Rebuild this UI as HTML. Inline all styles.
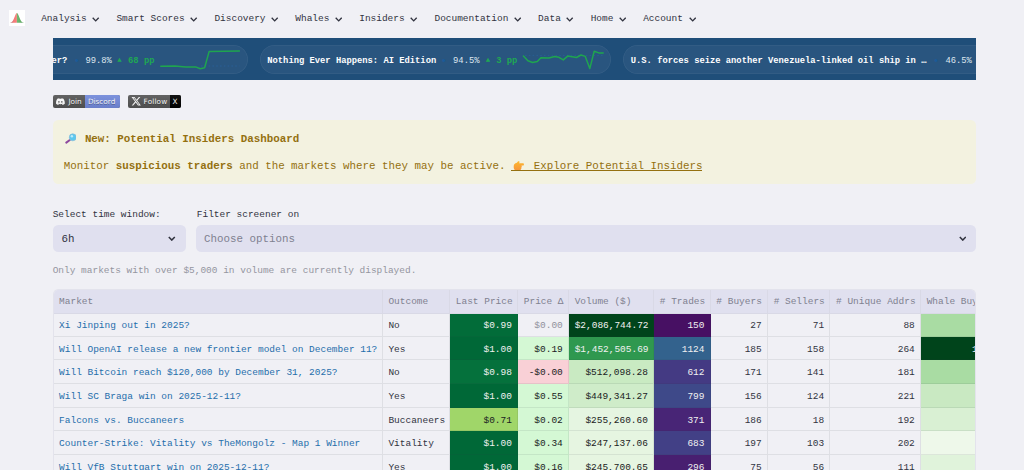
<!DOCTYPE html>
<html lang="en">
<head>
<meta charset="utf-8">
<title>Market Screener</title>
<style>
*{box-sizing:border-box;margin:0;padding:0}
html,body{width:1024px;height:470px;overflow:hidden;background:#f0f0f5}
body{font-family:"Liberation Mono","DejaVu Sans Mono",monospace;color:#31333f;position:relative;-webkit-font-smoothing:antialiased}
a{color:inherit}
/* ---------- nav ---------- */
#logo{position:absolute;left:9.1px;top:10.2px;width:15.9px;height:15.7px;background:#fff}
#nav{position:absolute;left:41.2px;top:10px;height:16px;display:flex;align-items:center;font-size:9.475px;color:#31333f;white-space:nowrap}
#nav .it{display:flex;align-items:center;margin-right:16.8px}
#nav svg{margin-left:5.6px;width:7.4px;height:5px;display:block;position:relative;top:1px}
/* ---------- ticker ---------- */
#ticker{position:absolute;left:53px;top:38px;width:923px;height:42.2px;background:#1f4e79;overflow:hidden;font-size:8.8px;color:#fff;white-space:nowrap}
.pill{position:absolute;top:6.8px;height:28.9px;border-radius:14.5px;background:#29557f;box-shadow:inset 0 0 0 0.8px rgba(255,255,255,.06)}
.pill span{position:absolute;top:11.5px;line-height:10px}
.pill .t{font-weight:bold;color:#fdfdfe}
.pill .d{color:#1b5a98;font-size:11px;margin-left:-0.6px;top:11.4px!important}
.pill .p{color:#dfe7f0}
.pill .g{color:#1fa853;font-weight:bold}
.pill svg{position:absolute;left:0;top:0;overflow:visible}
/* ---------- badges ---------- */
.badge{position:absolute;top:94.6px;height:13.3px;border-radius:2px;overflow:hidden;font-family:"DejaVu Sans","Liberation Sans",sans-serif;font-size:7.3px;color:#fff;line-height:13.3px;white-space:nowrap;background:#555}
.badge span{position:absolute;top:0;text-shadow:0 0.6px 0 rgba(0,0,0,.35)}
.badge .r{position:absolute;top:0;bottom:0;right:0}
.badge::after{content:"";position:absolute;inset:0;background:linear-gradient(180deg,rgba(255,255,255,.08),rgba(0,0,0,.08))}
/* ---------- banner ---------- */
#banner{position:absolute;left:52.5px;top:119.5px;width:923.5px;height:64.8px;border-radius:5.3px;background:#f3f2e0;color:#94700f;font-size:10.83px;white-space:nowrap}
#banner .h{position:absolute;left:12px;top:12.2px;line-height:14px;font-weight:bold}
#banner .l{position:absolute;left:11.2px;top:39.8px;line-height:14px}
#banner b{font-weight:bold}
#banner a{text-decoration:none;display:inline-block;position:relative;margin-left:-0.6px}
#banner a::after{content:"";position:absolute;left:0;right:0.4px;top:11.1px;height:0.9px;background:#94700f}
#banner a i{display:inline-block;width:15.7px;height:10.2px;vertical-align:-1.6px}
/* ---------- controls ---------- */
.lbl{position:absolute;top:209.1px;font-size:9.475px;line-height:12px;color:#31333f;white-space:nowrap}
.sel{position:absolute;top:225px;height:27px;border-radius:5.3px;background:#e0e0ef;font-size:10.83px;line-height:27px;white-space:nowrap}
.sel span{position:absolute;left:8.8px;top:1.4px}
.sel svg{position:absolute;top:10.6px;width:7.6px;height:5.4px}
#cap{position:absolute;left:52.7px;top:265.2px;font-size:9.475px;line-height:12px;color:#94959f;white-space:nowrap}
/* ---------- table ---------- */
#tw{position:absolute;left:52.5px;top:288.8px;width:923.8px;height:190px;overflow:hidden;border:0.7px solid #e3e3ec;border-bottom:0;border-radius:5.3px 5.3px 0 0}
table{border-collapse:separate;border-spacing:0;table-layout:fixed;width:981.5px;font-size:9.475px;white-space:nowrap}
th{height:24px;background:#e0e0ef;color:#7f8190;font-weight:normal;text-align:left;padding:1.4px 0 0 5.6px;border-right:0.7px solid #d9d9e6;border-bottom:0.7px solid #d9d9e6;overflow:hidden}
td{height:23.65px;padding:2px 5.3px 0 5.6px;border-right:0.7px solid rgba(49,51,63,.09);border-bottom:0.7px solid rgba(49,51,63,.09);overflow:hidden;color:#31333f}
tbody tr:first-child td{height:23px;padding-top:1px}
td.m{color:#1f6eab}
td.n{text-align:right}
td.w{color:#f1f1f1}
td.k{color:#1a1b22}
td.z{color:#90919c}
</style>
</head>
<body>

<div id="logo">
<svg width="16" height="16" viewBox="0 0 16 16">
<defs><linearGradient id="lg1" x1="0" x2="1" y1="0" y2="0"><stop offset="0" stop-color="#9a5f62"/><stop offset="0.55" stop-color="#f47a78"/><stop offset="1" stop-color="#f77f7c"/></linearGradient>
<linearGradient id="lg2" x1="0" x2="1" y1="0" y2="0"><stop offset="0" stop-color="#70b972"/><stop offset="0.55" stop-color="#64ae68"/><stop offset="1" stop-color="#4c8f55"/></linearGradient></defs>
<path d="M1.00 12.19 L1.46 12.11 L1.92 11.97 L2.38 11.76 L2.84 11.44 L3.30 10.99 L3.76 10.38 L4.22 9.60 L4.68 8.66 L5.14 7.58 L5.60 6.42 L6.06 5.26 L6.52 4.20 L6.98 3.35 L7.44 2.79 L7.90 2.60 L7.9 12.3 L1 12.3 Z" fill="url(#lg1)" transform="translate(0,0.5)"/>
<path d="M7.90 2.60 L8.36 2.79 L8.82 3.35 L9.28 4.20 L9.74 5.26 L10.20 6.42 L10.66 7.58 L11.12 8.66 L11.58 9.60 L12.04 10.38 L12.50 10.99 L12.96 11.44 L13.42 11.76 L13.88 11.97 L14.34 12.11 L14.80 12.19 L14.80 12.3 L7.9 12.3 Z" fill="url(#lg2)" transform="translate(0,0.5)"/>
</svg>
</div>

<div id="nav">
<div class="it">Analysis<svg viewBox="0 0 7.4 5"><path d="M0.7 0.8 L3.7 3.9 L6.7 0.8" fill="none" stroke="#31333f" stroke-width="1.35"/></svg></div>
<div class="it">Smart Scores<svg viewBox="0 0 7.4 5"><path d="M0.7 0.8 L3.7 3.9 L6.7 0.8" fill="none" stroke="#31333f" stroke-width="1.35"/></svg></div>
<div class="it">Discovery<svg viewBox="0 0 7.4 5"><path d="M0.7 0.8 L3.7 3.9 L6.7 0.8" fill="none" stroke="#31333f" stroke-width="1.35"/></svg></div>
<div class="it">Whales<svg viewBox="0 0 7.4 5"><path d="M0.7 0.8 L3.7 3.9 L6.7 0.8" fill="none" stroke="#31333f" stroke-width="1.35"/></svg></div>
<div class="it">Insiders<svg viewBox="0 0 7.4 5"><path d="M0.7 0.8 L3.7 3.9 L6.7 0.8" fill="none" stroke="#31333f" stroke-width="1.35"/></svg></div>
<div class="it">Documentation<svg viewBox="0 0 7.4 5"><path d="M0.7 0.8 L3.7 3.9 L6.7 0.8" fill="none" stroke="#31333f" stroke-width="1.35"/></svg></div>
<div class="it">Data<svg viewBox="0 0 7.4 5"><path d="M0.7 0.8 L3.7 3.9 L6.7 0.8" fill="none" stroke="#31333f" stroke-width="1.35"/></svg></div>
<div class="it">Home<svg viewBox="0 0 7.4 5"><path d="M0.7 0.8 L3.7 3.9 L6.7 0.8" fill="none" stroke="#31333f" stroke-width="1.35"/></svg></div>
<div class="it">Account<svg viewBox="0 0 7.4 5"><path d="M0.7 0.8 L3.7 3.9 L6.7 0.8" fill="none" stroke="#31333f" stroke-width="1.35"/></svg></div>
</div>

<div id="ticker">
  <!-- pill 1 (clipped on the left) -->
  <div class="pill" style="left:-120.5px;width:315.3px">
    <span class="t" style="right:180.4px">Fed decision in December?</span>
    <span class="d" style="left:141.6px">•</span>
    <span class="p" style="left:152.9px">99.8%</span>
    <span class="g" style="left:184.4px;font-size:7.4px;top:10.2px;margin-left:0.4px">▲</span>
    <span class="g" style="left:195.6px">68 pp</span>
    <svg width="315" height="29"><line x1="268" y1="21" x2="306.500" y2="21" stroke="#2b6cb3" stroke-opacity="0.55" stroke-width="0.8" stroke-dasharray="1.6 2.2"/><polyline points="227.8,21.2 242.1,21 252.7,21.9 262.6,21.9 267.3,23.7 271.6,22.7 276.1,6.6 306.4,6.1" fill="none" stroke="#1fa54f" stroke-width="1.5" stroke-linejoin="round" stroke-linecap="round"/></svg>
  </div>
  <!-- pill 2 -->
  <div class="pill" style="left:206.7px;width:351.3px">
    <span class="t" style="left:7.6px">Nothing Ever Happens: AI Edition</span>
    <span class="d" style="left:181.5px">•</span>
    <span class="p" style="left:193.4px">94.5%</span>
    <span class="g" style="left:225.6px;font-size:7.4px;top:10.2px;margin-left:0.4px">▲</span>
    <span class="g" style="left:236.6px">3 pp</span>
    <svg width="351" height="29"><line x1="265" y1="10.400" x2="343" y2="10.400" stroke="#2b6cb3" stroke-opacity="0.45" stroke-width="0.8" stroke-dasharray="1.6 2.2"/><polyline points="263.4,11 267.9,15.7 272.6,17.5 277.3,16.5 281,12.8 289,13 294.6,11.6 298.9,12.3 303.3,14.9 307.7,11.1 316.5,12.5 321,10 325.3,11.4 329.8,23.6 334.2,6.3 338.8,7.9 343.2,7.9" fill="none" stroke="#1fa54f" stroke-width="1.5" stroke-linejoin="round" stroke-linecap="round"/></svg>
  </div>
  <!-- pill 3 (clipped on the right) -->
  <div class="pill" style="left:570.4px;width:470px">
    <span class="t" style="left:7.4px">U.S. forces seize another Venezuela-linked oil ship in …</span>
    <span class="d" style="left:310px">•</span>
    <span class="p" style="left:322px">46.5%</span>
    <span class="g" style="left:354px;font-size:7.4px;top:10.2px;margin-left:0.4px">▼</span>
    <span class="g" style="left:365px">2 pp</span>
  </div>
</div>

<!-- badges -->
<div class="badge" style="left:52.6px;width:67.1px">
  <div class="r" style="width:34.9px;background:#7289da"></div>
  <svg style="position:absolute;left:3.8px;top:3px" width="8.8" height="7.4" viewBox="0 0 24 20"><path fill="#fff" d="M20.3 2.2A19.8 19.8 0 0 0 15.4.7c-.2.4-.5.9-.6 1.300a18.300 18.300 0 0 0-5.500 0C9.100 1.600 8.800 1.100 8.600.7A19.700 19.700 0 0 0 3.700 2.200C.6 6.900-.3 11.400.2 15.900a19.900 19.900 0 0 0 6 3.100c.5-.7.900-1.400 1.300-2.100-.7-.3-1.400-.600-2-1 .2-.100.300-.300.500-.400 3.900 1.800 8.200 1.800 12.100 0 .2.100.3.300.5.400-.6.400-1.300.700-2 1 .4.700.800 1.400 1.300 2.100a19.800 19.800 0 0 0 6-3.100c.6-5.200-.9-9.700-3.600-13.700zM8 13.200c-1.200 0-2.100-1.100-2.100-2.400S6.800 8.400 8 8.400s2.200 1.100 2.100 2.400c0 1.300-.9 2.400-2.100 2.400zm8 0c-1.200 0-2.100-1.100-2.100-2.400s.9-2.400 2.100-2.400 2.200 1.100 2.100 2.400c0 1.300-.9 2.400-2.100 2.400z"/></svg>
  <span style="left:15.8px">Join</span>
  <span style="left:35.3px">Discord</span>
</div>
<div class="badge" style="left:127.9px;width:53.3px">
  <div class="r" style="width:11.2px;background:#000"></div>
  <svg style="position:absolute;left:2.7px;top:1.5px" width="10.4" height="10.4" viewBox="0 0 24 24"><path fill="#fff" d="M18.244 2.25h3.308l-7.227 8.26 8.502 11.24H16.17l-5.214-6.817L4.99 21.75H1.68l7.73-8.835L1.254 2.25H8.08l4.713 6.231zm-1.161 17.52h1.833L7.084 4.126H5.117z"/></svg>
  <span style="left:15.7px;letter-spacing:0.13px">Follow</span>
  <span style="left:44.5px">X</span>
</div>

<!-- banner -->
<div id="banner">
  <div class="h"><svg style="vertical-align:-2.2px;margin-left:0.4px;margin-right:8.4px" width="11.6" height="11" viewBox="0 0 11.6 11"><line x1="1.3" y1="9.600" x2="4.800" y2="7" stroke="#8d4a9f" stroke-width="2" stroke-linecap="round"/><circle cx="7.800" cy="4.300" r="3.500" fill="#5cc8ee" stroke="#86bcd8" stroke-width="0.7"/><circle cx="6.900" cy="3.300" r="1.200" fill="#bdebfa"/></svg>New: Potential Insiders Dashboard</div>
  <div class="l">Monitor <b>suspicious traders</b> and the markets where they may be active. <a><i><svg style="margin-left:1.6px" width="11.2" height="10.2" viewBox="0 0 11.2 10.2"><defs><linearGradient id="hg" x1="0" y1="0" x2="0" y2="1"><stop offset="0" stop-color="#fdb92f"/><stop offset="1" stop-color="#f6943c"/></linearGradient></defs><path fill="url(#hg)" d="M0.800 4.600 C0.900 2.900 2.500 1.900 4 1.700 C4.300 0.700 5.200 -0.100 6.100 0.200 C6.800 0.500 6.500 1.700 6 2.300 L9.900 2.350 C11.300 2.400 11.300 4.500 9.900 4.500 L8.400 4.500 C9 5.100 8.900 6.100 8.300 6.400 C8.700 7 8.500 7.900 7.800 8.100 C8 8.900 7.400 9.800 6.500 9.800 L3.900 9.800 C1.700 9.800 0.500 7.800 0.700 5.800 Z"/></svg></i> Explore Potential Insiders</a></div>
</div>

<!-- controls -->
<div class="lbl" style="left:52.7px">Select time window:</div>
<div class="lbl" style="left:196.8px">Filter screener on</div>
<div class="sel" style="left:52.7px;width:132.9px"><span>6h</span><svg style="left:115.6px" viewBox="0 0 7.6 5.4"><path d="M0.8 0.9 L3.8 4.1 L6.800 0.9" fill="none" stroke="#31333f" stroke-width="1.5"/></svg></div>
<div class="sel" style="left:196.3px;width:779.7px"><span style="left:7.7px;color:#7f8190">Choose options</span><svg style="left:762.500px" viewBox="0 0 7.6 5.4"><path d="M0.8 0.9 L3.8 4.1 L6.800 0.9" fill="none" stroke="#31333f" stroke-width="1.5"/></svg></div>
<div id="cap">Only markets with over $5,000 in volume are currently displayed.</div>

<!-- table -->
<div id="tw">
<table>
<colgroup><col style="width:328.8px"><col style="width:67.3px"><col style="width:67.9px"><col style="width:50.8px"><col style="width:85px"><col style="width:56.5px"><col style="width:57.2px"><col style="width:62.3px"><col style="width:90.5px"><col style="width:113.7px"></colgroup>
<thead><tr><th>Market</th><th>Outcome</th><th>Last Price</th><th>Price Δ</th><th>Volume ($)</th><th># Trades</th><th># Buyers</th><th># Sellers</th><th># Unique Addrs</th><th>Whale Buy Vol ($)</th></tr></thead>
<tbody>
<tr><td class="m">Xi Jinping out in 2025?</td><td>No</td><td class="n w" style="background:#026c39">$0.99</td><td class="n z">$0.00</td><td class="n w" style="background:#00441b">$2,086,744.72</td><td class="n w" style="background:#471063">150</td><td class="n">27</td><td class="n">71</td><td class="n">88</td><td class="n k" style="background:#a9dca3">48,120.55</td></tr>
<tr><td class="m">Will OpenAI release a new frontier model on December 11?</td><td>Yes</td><td class="n w" style="background:#006837">$1.00</td><td class="n k" style="background:#d4f8d4">$0.19</td><td class="n w" style="background:#2f984f">$1,452,505.69</td><td class="n w" style="background:#33628d">1124</td><td class="n">185</td><td class="n">158</td><td class="n">264</td><td class="n w" style="background:#00441b">132,884.10</td></tr>
<tr><td class="m">Will Bitcoin reach $120,000 by December 31, 2025?</td><td>No</td><td class="n w" style="background:#05713c">$0.98</td><td class="n k" style="background:#f9d0d6">-$0.00</td><td class="n k" style="background:#c9eac2">$512,098.28</td><td class="n w" style="background:#443a83">612</td><td class="n">171</td><td class="n">141</td><td class="n">181</td><td class="n k" style="background:#a9dca3">47,902.31</td></tr>
<tr><td class="m">Will SC Braga win on 2025-12-11?</td><td>Yes</td><td class="n w" style="background:#006837">$1.00</td><td class="n k" style="background:#d4f8d4">$0.55</td><td class="n k" style="background:#cfecc9">$449,341.27</td><td class="n w" style="background:#3e4989">799</td><td class="n">156</td><td class="n">124</td><td class="n">221</td><td class="n k" style="background:#c9e9c2">29,514.77</td></tr>
<tr><td class="m">Falcons vs. Buccaneers</td><td>Buccaneers</td><td class="n k" style="background:#a0d669">$0.71</td><td class="n k" style="background:#d4f8d4">$0.02</td><td class="n k" style="background:#e5f5e1">$255,260.60</td><td class="n w" style="background:#482576">371</td><td class="n">186</td><td class="n">18</td><td class="n">192</td><td class="n k" style="background:#d9f0d3">21,403.18</td></tr>
<tr><td class="m">Counter-Strike: Vitality vs TheMongolz - Map 1 Winner</td><td>Vitality</td><td class="n w" style="background:#006837">$1.00</td><td class="n k" style="background:#d4f8d4">$0.34</td><td class="n k" style="background:#e6f5e1">$247,137.06</td><td class="n w" style="background:#424086">683</td><td class="n">197</td><td class="n">103</td><td class="n">202</td><td class="n k" style="background:#eef8ea">6,250.00</td></tr>
<tr><td class="m">Will VfB Stuttgart win on 2025-12-11?</td><td>Yes</td><td class="n w" style="background:#006837">$1.00</td><td class="n k" style="background:#d4f8d4">$0.16</td><td class="n k" style="background:#e6f5e1">$245,700.65</td><td class="n w" style="background:#481f70">296</td><td class="n">75</td><td class="n">56</td><td class="n">111</td><td class="n k" style="background:#e0f3db">15,870.42</td></tr>
</tbody>
</table>
</div>

</body>
</html>
